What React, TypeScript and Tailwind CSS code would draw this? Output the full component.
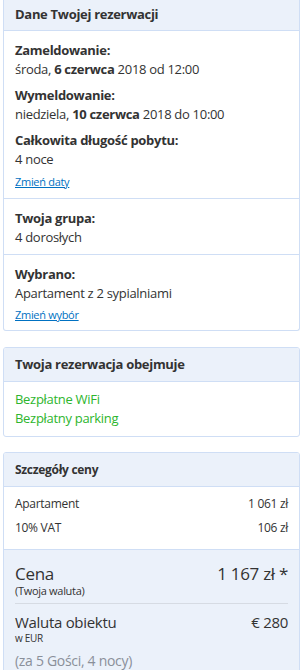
const font = { fontFamily: '"Open Sans", "Noto Sans", sans-serif', letterSpacing: "-0.3px" };

function Section({ children, last }: { children: React.ReactNode; last?: boolean }) {
  return (
    <div className={`px-[11px] pt-[9px] ${last ? "" : "border-b border-[#cfdef5]"}`}>{children}</div>
  );
}

export default function App() {
  return (
    <div className="w-[303px] bg-white text-[#333] px-[3px] pb-4" style={font}>
      {/* Booking details */}
      <div className="border-x border-b border-[#cfdef5] rounded-b-[3px]">
        <div className="h-[31px] bg-[#ebf1fa] border-b border-[#cfdef5] px-[11px] flex items-center text-[13px] font-bold">
          Dane Twojej rezerwacji
        </div>
        <Section>
          <div className="text-[13px] font-bold leading-[19px] mt-[1px]">Zameldowanie:</div>
          <div className="text-[13px] leading-[19px]">
            środa, <b>6 czerwca</b> 2018 od 12:00
          </div>
          <div className="text-[13px] font-bold leading-[19px] mt-[7px]">Wymeldowanie:</div>
          <div className="text-[13px] leading-[19px]">
            niedziela, <b>10 czerwca</b> 2018 do 10:00
          </div>
          <div className="text-[13px] font-bold leading-[19px] mt-[7px]">Całkowita długość pobytu:</div>
          <div className="text-[13px] leading-[19px]">4 noce</div>
          <a className="block text-[11px] text-[#0071c2] underline leading-[15px] mt-[5px] pb-[9px]">Zmień daty</a>
        </Section>
        <Section>
          <div className="text-[13px] font-bold leading-[19px] mt-[1px]">Twoja grupa:</div>
          <div className="text-[13px] leading-[19px] pb-[7px]">4 dorosłych</div>
        </Section>
        <Section last>
          <div className="text-[13px] font-bold leading-[19px] mt-[1px]">Wybrano:</div>
          <div className="text-[13px] leading-[19px]">Apartament z 2 sypialniami</div>
          <a className="block text-[11px] text-[#0071c2] underline leading-[15px] mt-[4px] pb-[8px]">Zmień wybór</a>
        </Section>
      </div>

      {/* Included */}
      <div className="mt-[16px] border border-[#cfdef5] rounded-[3px] overflow-hidden">
        <div className="h-[34px] bg-[#ebf1fa] border-b border-[#cfdef5] px-[11px] flex items-center text-[13px] font-bold">
          Twoja rezerwacja obejmuje
        </div>
        <div className="px-[11px] pt-[8px] pb-[8px] text-[13px] leading-[19px] text-[#2db52d]">
          <div>Bezpłatne WiFi</div>
          <div>Bezpłatny parking</div>
        </div>
      </div>

      {/* Price */}
      <div className="mt-[15px] border border-[#cfdef5] rounded-[3px] overflow-hidden">
        <div className="h-[34px] bg-[#ebf1fa] border-b border-[#cfdef5] px-[11px] flex items-center text-[12px] font-bold">
          Szczegóły ceny
        </div>
        <div className="px-[11px] pt-[5px] pb-[9px] text-[12px] leading-[24px] border-b border-[#cfdef5]">
          <div className="flex justify-between">
            <span>Apartament</span>
            <span>1 061 zł</span>
          </div>
          <div className="flex justify-between">
            <span>10% VAT</span>
            <span>106 zł</span>
          </div>
        </div>
        <div className="bg-[#ebf1fa] px-[11px] pt-[14px] pb-[8px]">
          <div className="flex justify-between items-start">
            <div>
              <div className="text-[17px] leading-[20px]">Cena</div>
              <div className="text-[11px] leading-[14px]">(Twoja waluta)</div>
            </div>
            <div className="text-[17px] leading-[20px]">1 167 zł *</div>
          </div>
          <div className="border-t border-[#d6dbe3] mt-[5px] mb-[9px]" />
          <div className="flex justify-between items-start">
            <div>
              <div className="text-[15px] leading-[19px]">Waluta obiektu</div>
              <div className="text-[10px] leading-[13px]">w EUR</div>
            </div>
            <div className="text-[15px] leading-[19px]">€ 280</div>
          </div>
          <div className="text-[14px] leading-[20px] text-[#8a8f99] mt-[6px]">(za 5 Gości, 4 nocy)</div>
        </div>
      </div>
    </div>
  );
}
